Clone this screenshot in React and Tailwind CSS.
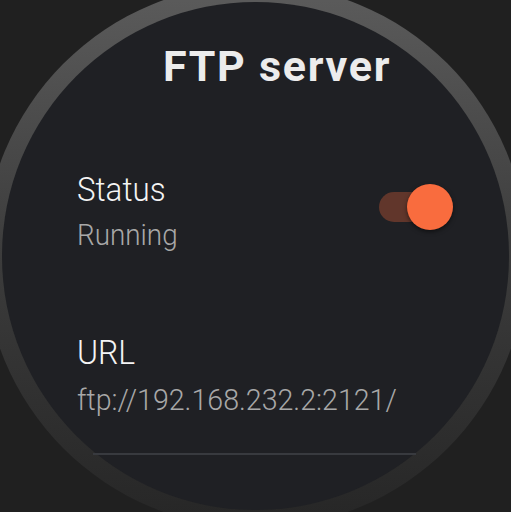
export default function App() {
  return (
    <div className="relative w-[511px] h-[512px] overflow-hidden bg-[#202020]" style={{ fontFamily: "Roboto, 'Noto Sans', sans-serif" }}>
      <div className="absolute left-[-16px] top-[-16px] w-[543px] h-[544px] rounded-full bg-gradient-to-b from-[#5c5c5c] via-[#3c3c3c] to-[#262626]" />
      <div className="absolute left-[2px] top-[2px] w-[507px] h-[508px] rounded-full bg-[#1f2024]" />
      <div className="relative flex flex-col pt-[45px]">
        <div className="pl-[163px] text-[43px] leading-[43px] font-bold tracking-[0.04em] text-[#ececec]">FTP server</div>
        <div className="mt-[85px] flex items-start justify-between pl-[77px] pr-[58px]">
          <div className="flex flex-col">
            <div className="origin-left scale-x-[0.92] text-[34px] leading-[33px] font-light text-[#f4f4f4]">Status</div>
            <div className="mt-[15px] origin-left scale-x-[0.96] text-[29px] leading-[28px] font-light text-[#a8a8a8]">Running</div>
          </div>
          <div className="relative mt-[11px] w-[74px] h-[46px]">
            <div className="absolute left-0 top-[8px] w-[62px] h-[30px] rounded-full bg-[#61362b]" />
            <div className="absolute right-0 top-0 w-[46px] h-[46px] rounded-full bg-[#f96c3e] shadow-[0_2px_4px_rgba(0,0,0,0.5)]" />
          </div>
        </div>
        <div className="mt-[87px] flex flex-col pl-[77px]">
          <div className="origin-left scale-x-[0.94] text-[34px] leading-[33px] font-light text-[#f4f4f4]">URL</div>
          <div className="mt-[17px] origin-left scale-x-[0.985] text-[29px] leading-[28px] font-light text-[#a8a8a8]">ftp://192.168.232.2:2121/</div>
        </div>
        <div className="mt-[39px] ml-[93px] w-[323px] h-[2px] bg-[#383a3f]" />
      </div>
    </div>
  );
}
